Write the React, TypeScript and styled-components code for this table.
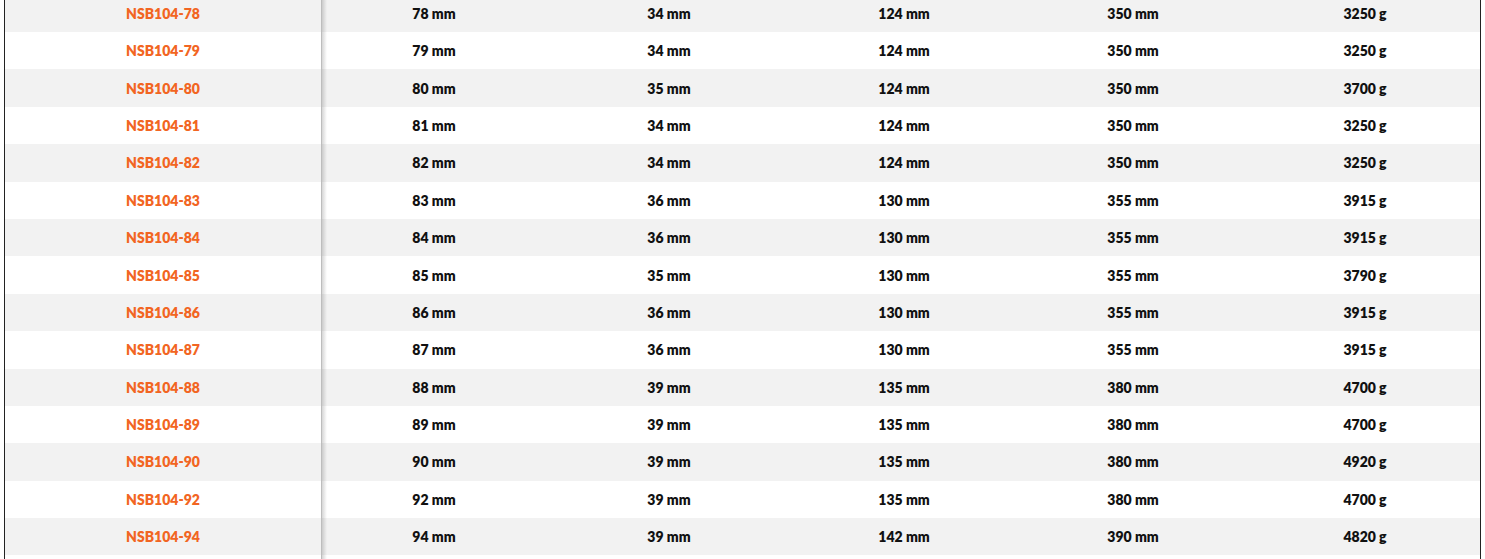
import React from "react";
import styled, { createGlobalStyle } from "styled-components";

const Global = createGlobalStyle`
  html, body { margin: 0; padding: 0; background: #ffffff; overflow: hidden; }
  body { font-family: Lato, "Liberation Sans", sans-serif; }
`;

const Frame = styled.div`
  margin-top: -5.4px;
  margin-left: 4px;
  width: 1477px;
  border-left: 1px solid #222;
  border-right: 1px solid #222;
  box-sizing: border-box;
`;

const Row = styled.div<{ $alt: boolean }>`
  display: grid;
  grid-template-columns: 317px 224px 246px 224px 234px 1fr;
  height: 37.4px;
  background: ${(p) => (p.$alt ? "#f2f2f2" : "#ffffff")};
`;

const StickyCell = styled.div`
  display: flex;
  align-items: center;
  justify-content: center;
  color: #f26522;
  font-weight: 800;
  font-size: 14px;
  border-right: 1px solid #bdbdbd;
  position: relative;
  z-index: 1;

  &::after {
    content: "";
    position: absolute;
    top: 0;
    bottom: 0;
    right: -6px;
    width: 5px;
    background: linear-gradient(to right, rgba(0, 0, 0, 0.16), rgba(0, 0, 0, 0));
  }
`;

const Cell = styled.div`
  display: flex;
  align-items: center;
  justify-content: center;
  color: #111;
  font-weight: 800;
  font-size: 14px;
`;

const rows: [string, string, string, string, string, string][] = [
  ["NSB104-78", "78 mm", "34 mm", "124 mm", "350 mm", "3250 g"],
  ["NSB104-79", "79 mm", "34 mm", "124 mm", "350 mm", "3250 g"],
  ["NSB104-80", "80 mm", "35 mm", "124 mm", "350 mm", "3700 g"],
  ["NSB104-81", "81 mm", "34 mm", "124 mm", "350 mm", "3250 g"],
  ["NSB104-82", "82 mm", "34 mm", "124 mm", "350 mm", "3250 g"],
  ["NSB104-83", "83 mm", "36 mm", "130 mm", "355 mm", "3915 g"],
  ["NSB104-84", "84 mm", "36 mm", "130 mm", "355 mm", "3915 g"],
  ["NSB104-85", "85 mm", "35 mm", "130 mm", "355 mm", "3790 g"],
  ["NSB104-86", "86 mm", "36 mm", "130 mm", "355 mm", "3915 g"],
  ["NSB104-87", "87 mm", "36 mm", "130 mm", "355 mm", "3915 g"],
  ["NSB104-88", "88 mm", "39 mm", "135 mm", "380 mm", "4700 g"],
  ["NSB104-89", "89 mm", "39 mm", "135 mm", "380 mm", "4700 g"],
  ["NSB104-90", "90 mm", "39 mm", "135 mm", "380 mm", "4920 g"],
  ["NSB104-92", "92 mm", "39 mm", "135 mm", "380 mm", "4700 g"],
  ["NSB104-94", "94 mm", "39 mm", "142 mm", "390 mm", "4820 g"],
];

const Tail = styled.div`
  display: grid;
  grid-template-columns: 317px 1fr;
  height: 10px;
  background: #ffffff;
`;

const TailSticky = styled.div`
  border-right: 1px solid #bdbdbd;
  position: relative;

  &::after {
    content: "";
    position: absolute;
    top: 0;
    bottom: 0;
    right: -6px;
    width: 5px;
    background: linear-gradient(to right, rgba(0, 0, 0, 0.16), rgba(0, 0, 0, 0));
  }
`;

export default function App() {
  return (
    <>
      <Global />
      <Frame>
        {rows.map((r, i) => (
          <Row key={r[0]} $alt={i % 2 === 0}>
            <StickyCell>{r[0]}</StickyCell>
            {r.slice(1).map((v, j) => (
              <Cell key={j}>{v}</Cell>
            ))}
          </Row>
        ))}
        <Tail>
          <TailSticky />
          <div />
        </Tail>
      </Frame>
    </>
  );
}
